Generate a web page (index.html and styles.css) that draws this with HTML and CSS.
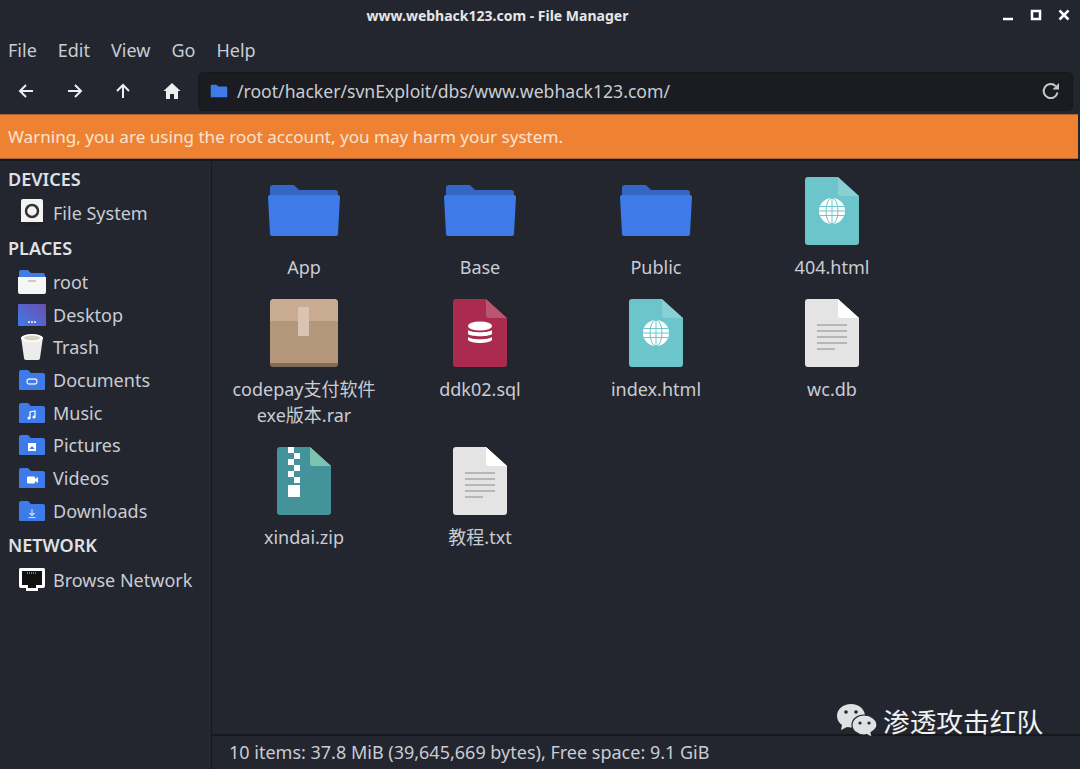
FILE: index.html
```html
<!DOCTYPE html>
<html lang="en">
    <head>
        <meta charset="UTF-8" />
        <title>www.webhack123.com - File Manager</title>
        <link rel="stylesheet" href="styles.css">
    </head>
    <body>
        <svg class="defs" width="0" height="0">
            <symbol id="folder" viewBox="0 0 72 52">
                <path d="M2 3a3 3 0 0 1 3-3h20a3 3 0 0 1 2 1l4 4h36a3 3 0 0 1 3 3v14H2z" fill="#3367c4"/>
                <path d="M0 12a2 2 0 0 1 2-2h68a2 2 0 0 1 2 2l-2 37a2 2 0 0 1-2 2H4a2 2 0 0 1-2-2z" fill="#3f7be8"/>
            </symbol>
            <symbol id="page" viewBox="0 0 54 68">
                <path d="M3 0h30l21 19v46a3 3 0 0 1-3 3H3a3 3 0 0 1-3-3V3a3 3 0 0 1 3-3z" fill="currentColor"/>
                <path d="M33 0l21 19H36a3 3 0 0 1-3-3z" fill="#fff" opacity=".2"/>
            </symbol>
            <symbol id="globe" viewBox="0 0 26 26">
                <circle cx="13" cy="13" r="13" fill="#fff"/>
                <path d="M1 8.500h24M0 13h26M1 17.500h24M13 0v26" stroke="#6cc5ca" stroke-width="1" fill="none"/>
                <ellipse cx="13" cy="13" rx="6" ry="13" stroke="#6cc5ca" stroke-width="1" fill="none"/>
            </symbol>
            <symbol id="textlines" viewBox="0 0 54 68">
                <path d="M3 0h30l21 19v46a3 3 0 0 1-3 3H3a3 3 0 0 1-3-3V3a3 3 0 0 1 3-3z" fill="#e4e4e4"/>
                <path d="M33 0l21 19H36a3 3 0 0 1-3-3z" fill="#fff"/>
                <path d="M12 26h30M12 32h30M12 38h30M12 44h30M12 50h18" stroke="#a8a8a8" stroke-width="1.600"/>
            </symbol>
            <symbol id="smallfolder" viewBox="0 0 28 22">
                <path d="M1 3a2 2 0 0 1 2-2h7l3 3h12a2 2 0 0 1 2 2v14a1 1 0 0 1-1 1H2a1 1 0 0 1-1-1z" fill="#3f7be8"/>
            </symbol>
        </svg>

        <div class="ventana">
            <header class="titulo">
                <span class="tituloTexto">www.webhack123.com - File Manager</span>
                <div class="botonesVentana">
                    <svg width="12" height="12" viewBox="0 0 12 12"><path d="M1 10h10" stroke="#fff" stroke-width="2.500"/></svg>
                    <svg width="12" height="12" viewBox="0 0 12 12"><path d="M2 2h8v8H2z" fill="none" stroke="#fff" stroke-width="2.500"/></svg>
                    <svg width="12" height="12" viewBox="0 0 12 12"><path d="M1.500 1.500l9 9M10.500 1.500l-9 9" stroke="#fff" stroke-width="2.500"/></svg>
                </div>
            </header>

            <nav class="menu">
                <a>File</a><a>Edit</a><a>View</a><a>Go</a><a>Help</a>
            </nav>

            <div class="barra">
                <div class="botones">
                    <svg width="18" height="18" viewBox="0 0 18 18"><path d="M16 9H3M9 3L3 9l6 6" fill="none" stroke="#eee" stroke-width="2"/></svg>
                    <svg width="18" height="18" viewBox="0 0 18 18"><path d="M2 9h13M9 3l6 6-6 6" fill="none" stroke="#eee" stroke-width="2"/></svg>
                    <svg width="18" height="18" viewBox="0 0 18 18"><path d="M9 16V3M3 9l6-6 6 6" fill="none" stroke="#eee" stroke-width="2"/></svg>
                    <svg width="18" height="18" viewBox="0 0 18 18"><path d="M9 1L0.500 9H3v8h4v-5h4v5h4V9h2.500z" fill="#eee"/></svg>
                </div>
                <div class="ruta">
                    <svg width="18" height="14" viewBox="0 0 28 22"><use href="#smallfolder"/></svg>
                    <span class="rutaTexto">/root/hacker/svnExploit/dbs/www.webhack123.com/</span>
                    <svg width="20" height="20" viewBox="0 0 20 20"><path d="M16.500 11.500a7 7 0 1 1-1.800-6.300" fill="none" stroke="#c8c8c8" stroke-width="2"/><path d="M18 2v6.500h-6.500z" fill="#c8c8c8"/></svg>
                </div>
            </div>

            <div class="aviso">Warning, you are using the root account, you may harm your system.</div>

            <div class="cuerpo">
                <aside class="lateral">
                    <h3>DEVICES</h3>
                    <a class="lugar">
                        <svg width="28" height="28" viewBox="0 0 28 28"><rect x="3" y="0" width="22" height="26" rx="2" fill="#f4f4f4"/><circle cx="14" cy="12" r="6" fill="none" stroke="#333" stroke-width="2.500"/><path d="M3 23h22v2a2 2 0 0 1-2 2H5a2 2 0 0 1-2-2z" fill="#222"/></svg>
                        File System
                    </a>
                    <h3>PLACES</h3>
                    <a class="lugar">
                        <svg width="28" height="28" viewBox="0 0 28 28"><path d="M1 4a2 2 0 0 1 2-2h7l3 3h12a2 2 0 0 1 2 2v4H1z" fill="#3f7be8"/><path d="M0 9h28v15a2 2 0 0 1-2 2H2a2 2 0 0 1-2-2z" fill="#f6f6f6"/><path d="M10 13h8" stroke="#bbb" stroke-width="1.500"/></svg>
                        root
                    </a>
                    <a class="lugar">
                        <svg width="28" height="28" viewBox="0 0 28 28"><defs><linearGradient id="fondo" x1="0" y1="1" x2="1" y2="0"><stop offset="0" stop-color="#3f7be8"/><stop offset="1" stop-color="#6a4fb0"/></linearGradient></defs><rect y="3" width="28" height="22" rx="1" fill="url(#fondo)"/><path d="M10 21h8" stroke="#fff" stroke-width="1.500" stroke-dasharray="2 1"/></svg>
                        Desktop
                    </a>
                    <a class="lugar">
                        <svg width="28" height="28" viewBox="0 0 28 28"><path d="M3 4h22l-3 21a2 2 0 0 1-2 2H8a2 2 0 0 1-2-2z" fill="#ececec"/><ellipse cx="14" cy="5" rx="11" ry="4" fill="#fff"/><ellipse cx="14" cy="5" rx="8" ry="2.500" fill="#d8d2c0"/></svg>
                        Trash
                    </a>
                    <a class="lugar">
                        <svg width="28" height="28" viewBox="0 0 28 22"><use href="#smallfolder"/><rect x="9" y="10" width="10" height="5" rx="2.500" fill="none" stroke="#dfe8fb" stroke-width="1.300"/></svg>
                        Documents
                    </a>
                    <a class="lugar">
                        <svg width="28" height="28" viewBox="0 0 28 22"><use href="#smallfolder"/><path d="M12 16V10l5-1v6" fill="none" stroke="#fff" stroke-width="1.200"/><circle cx="11" cy="16" r="1.500" fill="#fff"/><circle cx="16" cy="15" r="1.500" fill="#fff"/></svg>
                        Music
                    </a>
                    <a class="lugar">
                        <svg width="28" height="28" viewBox="0 0 28 22"><use href="#smallfolder"/><rect x="10" y="9" width="8" height="8" fill="#fff"/><path d="M11.500 15l2.500-3 2.500 3z" fill="#3f7be8"/></svg>
                        Pictures
                    </a>
                    <a class="lugar">
                        <svg width="28" height="28" viewBox="0 0 28 22"><use href="#smallfolder"/><rect x="9" y="9.500" width="8" height="7" rx="1" fill="#fff"/><path d="M17 12l3-2v6l-3-2z" fill="#fff"/></svg>
                        Videos
                    </a>
                    <a class="lugar">
                        <svg width="28" height="28" viewBox="0 0 28 22"><use href="#smallfolder"/><path d="M14 9v6M11.500 13l2.500 2.500 2.500-2.500M10.500 17.500h7" fill="none" stroke="#cfdcf8" stroke-width="1.200"/></svg>
                        Downloads
                    </a>
                    <h3>NETWORK</h3>
                    <a class="lugar">
                        <svg width="28" height="28" viewBox="0 0 28 28"><path d="M2 2h24a2 2 0 0 1 1 2v16a2 2 0 0 1-2 2h-5v3H8v-3H3a2 2 0 0 1-2-2V4a2 2 0 0 1 1-2z" fill="#fff"/><path d="M4 5h20v14h-6v3H10v-3H4z" fill="#111"/><path d="M9 7h10" stroke="#b59a3c" stroke-width="1.500" stroke-dasharray="1 1"/></svg>
                        Browse Network
                    </a>
                </aside>

                <main class="principal">
                    <div class="iconos">
                        <div class="item">
                            <div class="icono"><svg class="icoCarpeta" width="72" height="52"><use href="#folder"/></svg></div>
                            <span>App</span>
                        </div>
                        <div class="item">
                            <div class="icono"><svg class="icoCarpeta" width="72" height="52"><use href="#folder"/></svg></div>
                            <span>Base</span>
                        </div>
                        <div class="item">
                            <div class="icono"><svg class="icoCarpeta" width="72" height="52"><use href="#folder"/></svg></div>
                            <span>Public</span>
                        </div>
                        <div class="item">
                            <div class="icono">
                                <svg class="html" width="54" height="68" viewBox="0 0 54 68"><use href="#page" width="54" height="68"/><use href="#globe" x="14" y="21" width="26" height="26"/></svg>
                            </div>
                            <span>404.html</span>
                        </div>
                        <div class="item">
                            <div class="icono">
                                <svg width="68" height="68" viewBox="0 0 68 68"><rect width="68" height="68" rx="4" fill="#b4977a"/><path d="M0 4a4 4 0 0 1 4-4h60a4 4 0 0 1 4 4v18H0z" fill="#c8ab90"/><rect x="28" y="8" width="11" height="29" fill="#d8c4b0"/><path d="M0 64h68a4 4 0 0 1-4 4H4a4 4 0 0 1-4-4z" fill="#7f6b58"/></svg>
                            </div>
                            <span>codepay支付软件<br>exe版本.rar</span>
                        </div>
                        <div class="item">
                            <div class="icono">
                                <svg class="sql" width="54" height="68" viewBox="0 0 54 68"><use href="#page" width="54" height="68"/><ellipse cx="27" cy="27" rx="12" ry="4.500" fill="#fff"/><path d="M15 31c3 3 21 3 24 0v4c-3 3-21 3-24 0zM15 38c3 3 21 3 24 0v3c-3 4-21 4-24 0z" fill="#fff"/></svg>
                            </div>
                            <span>ddk02.sql</span>
                        </div>
                        <div class="item">
                            <div class="icono">
                                <svg class="html" width="54" height="68" viewBox="0 0 54 68"><use href="#page" width="54" height="68"/><use href="#globe" x="14" y="21" width="26" height="26"/></svg>
                            </div>
                            <span>index.html</span>
                        </div>
                        <div class="item">
                            <div class="icono"><svg width="54" height="68"><use href="#textlines"/></svg></div>
                            <span>wc.db</span>
                        </div>
                        <div class="item">
                            <div class="icono">
                                <svg class="zip" width="54" height="68" viewBox="0 0 54 68"><use href="#page" width="54" height="68"/><path d="M33 0l21 19H36a3 3 0 0 1-3-3z" fill="#7cc4ae"/><path d="M11 0h6v6h-6zM17 6h6v6h-6zM11 12h6v6h-6zM17 18h6v6h-6zM11 24h6v6h-6zM17 30h6v6h-6zM11 38h12v12H11z" fill="#fff"/></svg>
                            </div>
                            <span>xindai.zip</span>
                        </div>
                        <div class="item">
                            <div class="icono"><svg width="54" height="68"><use href="#textlines"/></svg></div>
                            <span>教程.txt</span>
                        </div>
                    </div>
                    <footer class="estado">10 items: 37.8 MiB (39,645,669 bytes), Free space: 9.1 GiB</footer>
                </main>
            </div>

            <div class="marca">
                <svg width="42" height="36" viewBox="0 0 42 36">
                    <path d="M15 1C7 1 1 6 1 13c0 4 2 7 5 9l-1 5 6-3c1 .3 3 .5 4 .5 8 0 14-5 14-11.500S23 1 15 1z" fill="#e0e1e3"/>
                    <path d="M28 12c-7 0-12 4.500-12 10s5 10 12 10c1 0 2-.1 3-.4l5 3-1-5c3-2 6-4.500 6-7.600 0-5.500-6-10-13-10z" fill="#e0e1e3" stroke="#23262f" stroke-width="1.200"/>
                    <circle cx="10" cy="9" r="1.800" fill="#23262f"/><circle cx="20" cy="9" r="1.800" fill="#23262f"/>
                    <circle cx="24" cy="20" r="1.600" fill="#23262f"/><circle cx="33" cy="20" r="1.600" fill="#23262f"/>
                </svg>
                <span>渗透攻击红队</span>
            </div>
        </div>
    </body>
</html>
```

FILE: styles.css
```css
*{
    margin: 0;
    padding: 0;
    box-sizing: border-box;
}
body{
    background-color: #23262f;
    color: #c9ccd3;
    font-family: "Noto Sans", "Noto Sans CJK SC", sans-serif;
    font-size: 18px;
    overflow: hidden;
}
.defs{
    position: absolute;
}
.ventana{
    position: relative;
    width: 1080px;
    height: 769px;
    display: flex;
    flex-direction: column;
}
.titulo{
    height: 31px;
    position: relative;
    display: flex;
    align-items: center;
    justify-content: center;
}
.tituloTexto{
    font-size: 14px;
    font-weight: 700;
    color: #e6e6e6;
    padding-right: 85px;
}
.botonesVentana{
    position: absolute;
    right: 10px;
    top: 9px;
    display: flex;
    gap: 16px;
}
.botonesVentana svg{
    display: block;
}
.menu{
    height: 38px;
    display: flex;
    align-items: center;
    padding-left: 8px;
    gap: 21px;
}
.barra{
    height: 45px;
    padding-bottom: 1px;
    display: flex;
    align-items: center;
}
.botones{
    width: 198px;
    padding-left: 17px;
    display: flex;
    gap: 30.500px;
    flex-shrink: 0;
}
.ruta{
    width: 875px;
    height: 39px;
    background-color: #1b1c21;
    border: 1px solid #17181c;
    border-radius: 5px;
    display: flex;
    align-items: center;
    padding: 0 11px 0 11px;
    gap: 9px;
    font-size: 17.600px;
}
.rutaTexto{
    flex: 1;
}
.aviso{
    width: 1078px;
    height: 45px;
    line-height: 43px;
    background-color: #ee8232;
    border-top: 1px solid #a86432;
    border-bottom: 1px solid #a86432;
    padding-left: 8px;
    color: #fbe3d0;
    font-size: 17.100px;
}
.cuerpo{
    flex: 1;
    display: flex;
    border-top: 2px solid #17181c;
    min-height: 0;
}
.lateral{
    width: 212px;
    border-right: 1px solid #17181c;
    padding-left: 8px;
    flex-shrink: 0;
}
.lateral h3{
    font-size: 18px;
    font-weight: 600;
    color: #dfe1e6;
    height: 36px;
    line-height: 36px;
}
.lugar{
    display: flex;
    align-items: center;
    gap: 7px;
    height: 32.700px;
    padding-left: 10px;
}
.lugar svg{
    flex-shrink: 0;
}
.principal{
    flex: 1;
    display: flex;
    flex-direction: column;
    min-width: 0;
}
.iconos{
    flex: 1;
    padding: 16px 0 0 4px;
    display: grid;
    grid-template-columns: repeat(4, 176px);
    align-content: start;
}
.item{
    display: flex;
    flex-direction: column;
    align-items: center;
    text-align: center;
    line-height: 26px;
    padding-bottom: 19px;
}
.icono{
    height: 76px;
    margin-bottom: 1px;
    display: flex;
    align-items: flex-start;
    justify-content: center;
}
.icono svg{
    display: block;
}
.icoCarpeta{
    margin-top: 8px;
}
.html{
    color: #6cc5ca;
}
.sql{
    color: #ab2b4e;
}
.zip{
    color: #44939a;
}
.estado{
    height: 35px;
    line-height: 33px;
    border-top: 2px solid #17181c;
    padding-left: 17px;
}
.marca{
    position: absolute;
    left: 836px;
    top: 701px;
    display: flex;
    align-items: center;
    gap: 5px;
    color: #f0f0f0;
    font-size: 26.700px;
}
```
